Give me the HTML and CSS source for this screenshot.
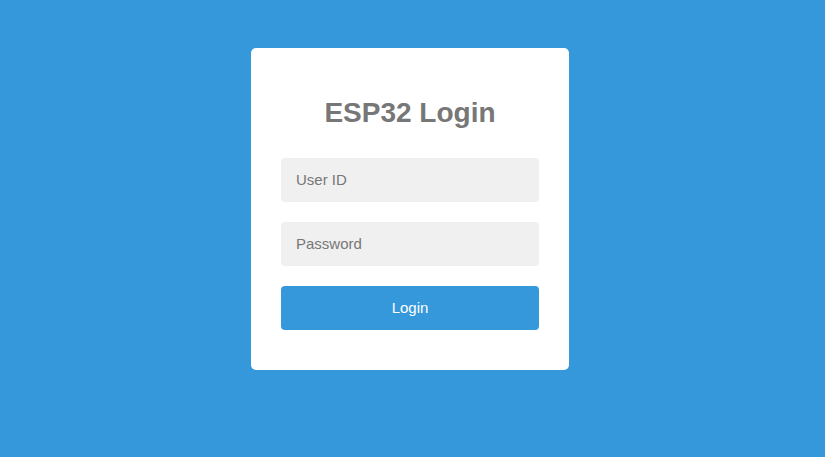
FILE: index.html
```html
<!DOCTYPE html>
<html>
<head>
<meta charset="utf-8">
<title>ESP32 Login</title>
<link rel="stylesheet" href="styles.css">
</head>
<body>
<div class="page">
  <form class="card">
    <h1 class="title">ESP32 Login</h1>
    <input class="field" type="text" placeholder="User ID">
    <input class="field" type="password" placeholder="Password">
    <button class="btn" type="button">Login</button>
  </form>
</div>
</body>
</html>
```
FILE: styles.css
```css
html, body {
  margin: 0;
  padding: 0;
  height: 100%;
}
body {
  background: #3498db;
  font-family: "Liberation Sans", Arial, sans-serif;
}
.page {
  display: flex;
  justify-content: center;
  padding: 48px 5px 0 0;
}
.card {
  width: 258px;
  background: #fff;
  border-radius: 5px;
  padding: 30px 30px 40px;
  display: flex;
  flex-direction: column;
  gap: 20px;
}
.title {
  margin: 19px 0 9px;
  font-size: 28px;
  line-height: 32px;
  font-weight: bold;
  color: #777;
  text-align: center;
}
.field {
  box-sizing: border-box;
  width: 100%;
  height: 44px;
  margin: 0;
  border: none;
  border-radius: 4px;
  background: #f0f0f0;
  padding: 0 15px 2px;
  font-family: "Liberation Sans", Arial, sans-serif;
  font-size: 15px;
  color: #555;
  outline: none;
}
.field::placeholder {
  color: #777;
}
.btn {
  width: 100%;
  height: 44px;
  margin: 0;
  padding: 0 0 2px;
  border: none;
  border-radius: 4px;
  background: #3498db;
  color: #fff;
  font-family: "Liberation Sans", Arial, sans-serif;
  font-size: 15px;
  cursor: pointer;
}
```
